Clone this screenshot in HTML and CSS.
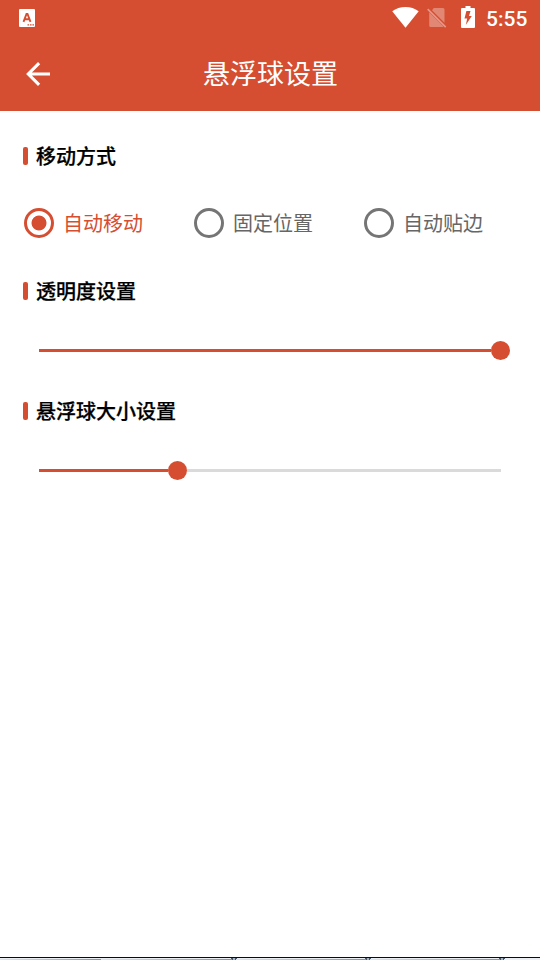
FILE: index.html
```html
<!DOCTYPE html>
<html lang="zh-CN">
<head>
<meta charset="utf-8">
<title>悬浮球设置</title>
<link rel="stylesheet" href="styles.css">
</head>
<body>
<div class="screen">
  <header class="header">
    <div class="status-bar">
      <svg class="status-app" width="16" height="18" viewBox="0 0 16 18"><rect width="16" height="18" rx="1" fill="#fff"/><path d="M4.5 12.8 7.5 5h1L11.5 12.8M5.7 10.3h4.6" fill="none" stroke="#d54e31" stroke-width="1.9"/><path d="M8.5 15.8h1.6M11 15.8h1.6M13.4 15.8H15" stroke="#d54e31" stroke-width="1.3"/></svg>
      <div class="status-right">
        <svg class="wifi" width="28" height="22" viewBox="0 0 28 22"><path d="M14.5 21.8 1.2 5.3C5 2.5 9.5 1 14.5 1S23.9 2.5 27.7 5.3Z" fill="#fff"/></svg>
        <svg class="sim" width="20" height="21" viewBox="0 0 20 21"><g opacity=".32"><path d="M6.8 1H16q1.5 0 1.5 1.5v13.3L5 3.2ZM2.2 5.3 16.5 19.6q-.4.4-1 .4H3.7q-1.5 0-1.5-1.5Z" fill="#fff"/></g><path d="m.7 2.1 18 18" stroke="#e7978a" stroke-width="1.6"/></svg>
        <svg class="battery" width="14" height="22" viewBox="0 0 14 22"><path d="M4.5 0h5v2H13q1 0 1 1v18q0 1-1 1H1q-1 0-1-1V3q0-1 1-1h3.5Z" fill="#fff"/><path d="M9.5 5H5.4L3.5 12.6h2.7L4.8 19l6-9H8Z" fill="#d54e31"/></svg>
        <span class="clock">5:55</span>
      </div>
    </div>
    <div class="title-bar">
      <svg class="back" width="26" height="26" viewBox="0 0 26 26"><path d="M14.1 2.2 3.3 13l10.8 10.8M3.3 13H25" fill="none" stroke="#fff" stroke-width="3.1"/></svg>
      <h1 class="title">悬浮球设置</h1>
    </div>
  </header>
  <main class="content">
    <h2 class="heading">移动方式</h2>
    <div class="options">
      <div class="option selected"><span class="radio"></span><span>自动移动</span></div>
      <div class="option"><span class="radio"></span><span>固定位置</span></div>
      <div class="option"><span class="radio"></span><span>自动贴边</span></div>
    </div>
    <h2 class="heading">透明度设置</h2>
    <div class="slider"><span class="fill" style="width:452px"></span><span class="thumb"></span><span class="rest"></span></div>
    <h2 class="heading">悬浮球大小设置</h2>
    <div class="slider"><span class="fill" style="width:129px"></span><span class="thumb"></span><span class="rest"></span></div>
  </main>
  <footer class="edge">
    <svg width="540" height="3" viewBox="0 0 540 3">
      <defs><linearGradient id="shade"><stop stop-color="#dfe5e9"/><stop offset="1" stop-color="#8498ad"/></linearGradient></defs>
      <path d="M0 0h540v3H0Z" fill="#e9eff4"/>
      <path d="M0 .5h540" stroke="#090d13"/>
      <rect y="2" width="101" height="1" fill="url(#shade)"/><rect x="101" y="2" width="131" height="1" fill="url(#shade)"/><rect x="236" y="2" width="130" height="1" fill="url(#shade)"/><rect x="370" y="2" width="130" height="1" fill="url(#shade)"/>
      <path d="M231 1h6v1h-1v1h-4V2h-1ZM365 1h6v1h-1v1h-4V2h-1ZM499 1h6v1h-1v1h-4V2h-1Z" fill="#465668"/>
      <path d="M233 1h2v2h-2ZM367 1h2v2h-2ZM501 1h2v2h-2Z" fill="#a4b5c5"/>
    </svg>
  </footer>
</div>
</body>
</html>
```
FILE: styles.css
```css
* { box-sizing: border-box; }
body {
  margin: 0;
  background: #fff;
  font-family: "Noto Sans CJK SC", sans-serif;
}
.screen {
  width: 540px;
  height: 960px;
  display: flex;
  flex-direction: column;
  overflow: hidden;
}
.header { height: 111px; background: #d54e31; color: #fff; }
.status-bar {
  height: 37px;
  display: flex;
  justify-content: space-between;
  align-items: flex-start;
  padding: 0 12px 0 19px;
}
.status-bar svg, .back, .edge svg { display: block; flex: none; }
.status-app { margin-top: 9px; }
.status-right { display: flex; align-items: flex-start; }
.wifi { margin: 6px 8px 0 0; }
.sim { margin: 7px 14px 0 0; }
.battery { margin: 6px 11px 0 0; }
.clock {
  width: 42px;
  font: 500 21px/39px Roboto, sans-serif;
  white-space: nowrap;
}
.title-bar {
  height: 74px;
  display: grid;
  grid-template-columns: 26px 1fr 26px;
  align-items: center;
  padding: 0 25px;
}
.title { margin: 0 0 2px 1px; text-align: center; font-size: 27px; line-height: 40px; font-weight: 400; }
.content { flex: 1; padding: 30px 23px 0; }
.heading {
  display: flex;
  align-items: center;
  gap: 8px;
  height: 30px;
  margin: 0;
  color: #000;
  font-size: 20px;
  line-height: 30px;
  font-weight: 500;
  -webkit-text-stroke: .25px #000;
}
.heading::before { content: ""; width: 5px; height: 18px; border-radius: 2px; background: #d54e31; }
.options {
  display: grid;
  grid-template-columns: repeat(3, 170px);
  height: 105px;
  align-items: center;
  padding: 0 0 1px 1px;
}
.option { display: flex; align-items: center; gap: 9px; color: #666; font-size: 20px; line-height: 30px; }
.radio {
  width: 30px;
  height: 30px;
  border: 3px solid #757575;
  border-radius: 50%;
  display: grid;
  place-items: center;
}
.selected { color: #d54e31; }
.selected .radio { border-color: #d54e31; }
.selected .radio::before {
  content: "";
  width: 16px;
  height: 16px;
  background: radial-gradient(circle, #d54e31 7px, transparent 7.9px);
}
.slider { display: flex; align-items: center; height: 90px; padding: 0 16px 1px; margin-right: -9px; }
.fill { flex: none; height: 3px; background: #d54e31; }
.thumb { flex: none; width: 19px; height: 19px; border-radius: 50%; background: #d54e31; }
.rest { flex: none; height: 3px; background: #dadada; }
.slider:last-child .rest { width: 314px; }
.edge { height: 3px; }
```
